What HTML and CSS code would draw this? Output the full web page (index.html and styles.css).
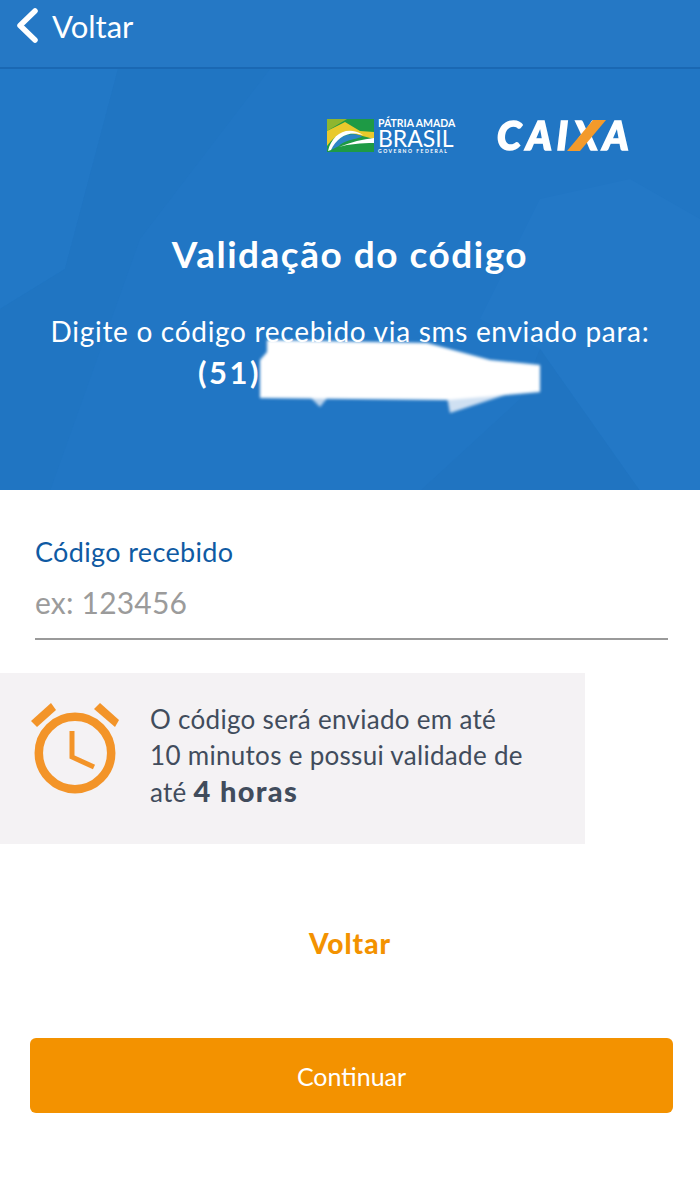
FILE: index.html
```html
<!DOCTYPE html>
<html lang="pt-BR">
<head>
  <meta charset="UTF-8">
  <title>Validação do código</title>
  <link rel="stylesheet" href="styles.css">
</head>
<body>

  <header class="topbar">
    <svg class="back-icon" width="26" height="42" viewBox="0 0 26 42">
      <path d="M21 6 L6 20.5 L21 35" fill="none" stroke="#fff" stroke-width="5.5" stroke-linecap="round" stroke-linejoin="round"/>
    </svg>
    <span class="back-label">Voltar</span>
  </header>

  <section class="hero">
    <svg class="hero-facets" width="700" height="422" viewBox="0 0 700 422">
      <polygon points="0,0 118,0 65,200 0,240" fill="#2278c6"/>
      <polygon points="118,0 270,0 140,170 50,422 0,422 0,240 65,200" fill="#2075c2"/>
      <polygon points="630,110 700,150 700,422 640,422 540,280 480,250 540,130" fill="#2378c6"/>
      <polygon points="540,280 640,422 420,422 520,330" fill="#2074c1"/>
    </svg>

    <div class="logos">
      <div class="logo-brasil">
        <svg class="flag" width="47" height="33" viewBox="0 0 47 33">
          <rect width="47" height="33" fill="#1e9a45"/>
          <polygon points="0,0 20,0 0,12" fill="#8fb62f"/>
          <path d="M0 27 L0 12 L18 3 L33 12 L47 13 L47 20 L24 14 C12 13 5 20 0 27 Z" fill="#e9c92c"/>
          <path d="M4 31 C9 18 22 12 35 17 C34 20 18 20 12 27 Z" fill="#2d84c6"/>
          <path d="M1 32 C5 15 20 6 36 16 C22 11 10 18 4 31 Z" fill="#fff"/>
          <path d="M12 28 C24 23 36 20 47 19 L47 24 C34 24 22 25 12 28 Z" fill="#fff"/>
        </svg>
        <div class="brasil-text">
          <span class="brasil-top">PÁTRIA AMADA</span>
          <span class="brasil-main">BRASIL</span>
          <span class="brasil-sub">GOVERNO FEDERAL</span>
        </div>
      </div>
      <div class="logo-caixa">
        <span class="caixa-text">CAIXA</span>
        <svg class="caixa-stripe" width="40" height="31" viewBox="0 0 40 31">
          <polygon points="26,0 39,0 13,31 0,31" fill="#f39a2b"/>
        </svg>
      </div>
    </div>

    <h1 class="hero-title">Validação do código</h1>
    <p class="hero-text">Digite o código recebido via sms enviado para:</p>
    <p class="hero-phone">(51)</p>

    <svg class="smudge" width="300" height="90" viewBox="0 0 300 90">
      <polygon points="66,62 84,62 76,72" fill="#bcd4ec"/>
      <polygon points="203,62 261,60 206,78" fill="#cfe0f2"/>
      <polygon points="23,5 183,8 246,25 296,30 296,57 204,65 16,63 16,25 23,17" fill="#fff"/>
    </svg>
  </section>

  <main class="content">
    <label class="field-label" for="codigo">Código recebido</label>
    <input class="field-input" id="codigo" type="text" placeholder="ex: 123456">

    <div class="notice">
      <svg class="clock" width="92" height="96" viewBox="0 0 92 96">
        <circle cx="46" cy="52" r="36.2" fill="none" stroke="#f39428" stroke-width="8.5"/>
        <path d="M43 30 V56 L65 66" fill="none" stroke="#f39428" stroke-width="5"/>
        <polygon points="2,20 22,2 27,9 8,26" fill="#f39428"/>
        <polygon points="65,8 71,2 90,19 86,26" fill="#f39428"/>
      </svg>
      <p class="notice-text">O código será enviado em até<br>10 minutos e possui validade de<br>até <strong>4 horas</strong></p>
    </div>

    <a class="back-link" href="#">Voltar</a>
    <button class="submit-btn">Continuar</button>
  </main>

</body>
</html>
```

FILE: styles.css
```css
html, body {
  margin: 0;
  height: 100%;
  font-family: Lato, 'Open Sans', sans-serif;
  background-color: #fff;
  color: #3d4858;
}

.topbar {
  display: flex;
  align-items: center;
  box-sizing: border-box;
  height: 69px;
  padding: 0 0 15px 14px;
  background-color: #2578c5;
  border-bottom: 2px solid #1a68b3;
}

.back-icon {
  margin-right: 12px;
}

.back-label {
  font-size: 31px;
  color: #fff;
}

.hero {
  position: relative;
  height: 421px;
  overflow: hidden;
  background-color: #2176c4;
  color: #fff;
  text-align: center;
}

.hero-facets {
  position: absolute;
  top: 0;
  left: 0;
}

.logos {
  position: relative;
  display: flex;
  justify-content: flex-end;
  align-items: center;
  height: 38px;
  padding: 47px 69px 0 0;
}

.logo-brasil {
  display: flex;
  align-items: center;
  margin-right: 43px;
}

.flag {
  margin-right: 4px;
}

.brasil-text {
  display: flex;
  flex-direction: column;
  width: 76px;
  text-align: left;
  white-space: nowrap;
}

.brasil-top {
  font-size: 10.5px;
  font-weight: 700;
  line-height: 12px;
}

.brasil-main {
  font-size: 23px;
  line-height: 19px;
}

.brasil-sub {
  font-size: 5px;
  font-weight: 700;
  letter-spacing: 1.5px;
  line-height: 6px;
}

.logo-caixa {
  position: relative;
  width: 134px;
  height: 32px;
}

.caixa-text {
  display: block;
  font-size: 39px;
  font-weight: 900;
  font-style: italic;
  line-height: 32px;
  letter-spacing: 5px;
  text-align: left;
  -webkit-text-stroke: 1.6px #fff;
  filter: blur(0.7px);
}

.caixa-stripe {
  position: absolute;
  top: 1px;
  left: 70px;
}

.hero-title {
  position: relative;
  margin: 79px 0 0;
  font-size: 37px;
  font-weight: 700;
  line-height: 42px;
  letter-spacing: 1.5px;
}

.hero-text {
  position: relative;
  margin: 38px 0 0;
  font-size: 28px;
  font-weight: 400;
  line-height: 36px;
  letter-spacing: 0.7px;
}

.hero-phone {
  position: relative;
  margin: 5px 0 0 198px;
  font-size: 31px;
  font-weight: 700;
  line-height: 36px;
  text-align: left;
  letter-spacing: 2.5px;
}

.smudge {
  position: absolute;
  top: 266px;
  left: 244px;
  filter: blur(1.5px);
}

.content {
  display: flex;
  flex-direction: column;
}

.field-label {
  margin: 44px 0 0 35px;
  font-size: 27px;
  line-height: 36px;
  letter-spacing: 0.35px;
  color: #0f5aa3;
}

.field-input {
  box-sizing: border-box;
  width: 633px;
  height: 70px;
  margin: 0 0 0 35px;
  padding: 0 0 4px;
  border: none;
  border-bottom: 2px solid #9a9a9a;
  outline: none;
  font-family: inherit;
  font-size: 30px;
  letter-spacing: 0.2px;
}

.field-input::placeholder {
  color: #9b9b9b;
  opacity: 1;
}

.notice {
  display: flex;
  box-sizing: border-box;
  width: 585px;
  height: 171px;
  margin-top: 33px;
  padding: 28px 0 0 29px;
  background-color: #f4f2f4;
}

.clock {
  flex: none;
  margin-right: 29px;
}

.notice-text {
  margin: 0;
  font-size: 26px;
  line-height: 36px;
  letter-spacing: 0.3px;
  color: #414c5c;
  white-space: nowrap;
}

.notice-text strong {
  font-size: 29px;
  font-weight: 900;
  letter-spacing: 1.3px;
}

.back-link {
  margin-top: 83px;
  font-size: 28px;
  font-weight: 900;
  line-height: 32px;
  letter-spacing: 1px;
  color: #f39200;
  text-align: center;
  text-decoration: none;
}

.submit-btn {
  width: 643px;
  height: 75px;
  margin: 79px 0 0 30px;
  border: none;
  border-radius: 6px;
  background-color: #f39200;
  color: #fff;
  font-family: inherit;
  font-size: 25px;
}
```
